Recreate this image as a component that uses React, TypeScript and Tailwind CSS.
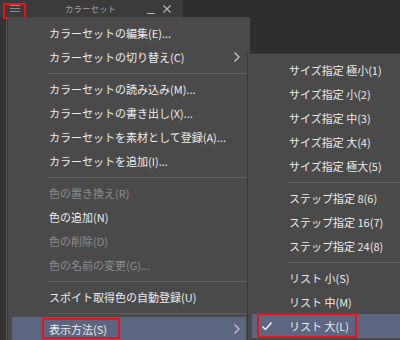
import React from 'react';

type Item =
  | { sep: true }
  | { label: string; disabled?: boolean; sub?: boolean; selected?: boolean; checked?: boolean; boxed?: boolean };

const mainItems: Item[] = [
  { label: 'カラーセットの編集(E)...' },
  { label: 'カラーセットの切り替え(C)', sub: true },
  { sep: true },
  { label: 'カラーセットの読み込み(M)...' },
  { label: 'カラーセットの書き出し(X)...' },
  { label: 'カラーセットを素材として登録(A)...' },
  { label: 'カラーセットを追加(I)...' },
  { sep: true },
  { label: '色の置き換え(R)', disabled: true },
  { label: '色の追加(N)' },
  { label: '色の削除(D)', disabled: true },
  { label: '色の名前の変更(G)...', disabled: true },
  { sep: true },
  { label: 'スポイト取得色の自動登録(U)' },
  { sep: true },
  { label: '表示方法(S)', sub: true, selected: true, boxed: true },
];

const subItems: Item[] = [
  { label: 'サイズ指定 極小(1)' },
  { label: 'サイズ指定 小(2)' },
  { label: 'サイズ指定 中(3)' },
  { label: 'サイズ指定 大(4)' },
  { label: 'サイズ指定 極大(5)' },
  { sep: true },
  { label: 'ステップ指定 8(6)' },
  { label: 'ステップ指定 16(7)' },
  { label: 'ステップ指定 24(8)' },
  { sep: true },
  { label: 'リスト 小(S)' },
  { label: 'リスト 中(M)' },
  { label: 'リスト 大(L)', selected: true, checked: true, boxed: true },
];

const Chevron = () => (
  <svg width="8" height="12" viewBox="0 0 8 12" className="absolute right-[5px] top-[6px]">
    <path d="M1.5 1.5 L6 6 L1.5 10.5" fill="none" stroke="#c8c8c8" strokeWidth="1.3" />
  </svg>
);

const Check = () => (
  <svg width="12" height="10" viewBox="0 0 12 10" className="absolute left-[9px] top-[7px]">
    <path d="M1.5 5.5 L4.5 8.5 L10.5 1.5" fill="none" stroke="#f0f0f0" strokeWidth="1.5" />
  </svg>
);

const MenuRows = ({ items, boxClass }: { items: Item[]; boxClass: string }) => (
  <>
    {items.map((it, i) =>
      'sep' in it ? (
        <div key={i} className="h-[8px] flex items-center ml-[36px] -mr-[4px]">
          <div className="h-px w-full bg-[#616161]" />
        </div>
      ) : (
        <div
          key={i}
          className={`relative h-[24px] flex items-center pl-[37px] whitespace-nowrap ${
            it.selected ? 'bg-[#5d6680]' : ''
          } ${it.disabled ? 'text-[#8a8a8a]' : 'text-[#ececec]'}`}
        >
          {it.checked && <Check />}
          {it.boxed && <div className={`absolute border-2 border-[#e8121c] ${boxClass}`} />}
          <span>{it.label}</span>
          {it.sub && <Chevron />}
        </div>
      )
    )}
  </>
);

export default function App() {
  return (
    <div
      className="relative w-[400px] h-[340px] overflow-hidden bg-[#2e2e2e] text-[11px]"
      style={{ fontFamily: '"Noto Sans CJK JP", "Noto Sans", sans-serif' }}
    >
      {/* palette window underneath */}
      <div className="flex flex-col w-[183px] h-full">
        <div className="relative h-[17px] bg-[#3b3b3b] flex items-center">
          <div className="absolute left-[3px] top-[3px] w-[23px] h-[16px] border-2 border-[#e8121c]" />
          <div className="ml-[10px] flex flex-col gap-[2px] w-[10px]">
            <div className="h-px bg-[#8c8c8c]" />
            <div className="h-px bg-[#8c8c8c]" />
            <div className="h-px bg-[#8c8c8c]" />
          </div>
          <div className="flex-1 text-center text-[8.5px] text-[#a0a0a0] pl-[14px]">カラーセット</div>
          <div className="w-[8px] h-px bg-[#b0b0b0] mt-[9px] mr-[8px]" />
          <svg width="8" height="8" viewBox="0 0 8 8" className="mr-[12px]">
            <path d="M0.5 0.5 L7.5 7.5 M7.5 0.5 L0.5 7.5" stroke="#b8b8b8" strokeWidth="1.2" />
          </svg>
        </div>
        <div className="flex-1 flex">
          <div className="w-[6px] bg-[#333333]" />
          <div className="w-px bg-[#555555]" />
          <div className="flex-1 bg-[#3a3a3a]" />
        </div>
      </div>

      {/* main context menu */}
      <div className="absolute left-[8px] top-[17px] w-[242px] h-[340px] bg-[#4a4a4a] px-[4px] pt-[4px]">
        <MenuRows items={mainItems} boxClass="left-[30px] top-[1px] w-[78px] h-[21px]" />
      </div>

      {/* submenu */}
      <div className="absolute left-[247px] top-[53px] w-[160px] h-[300px] bg-[#4a4a4a] border border-[#3a3a3a] px-[4px] pt-[4px]">
        <MenuRows items={subItems} boxClass="left-[5px] top-[-1px] w-[100px] h-[25px]" />
      </div>
    </div>
  );
}
